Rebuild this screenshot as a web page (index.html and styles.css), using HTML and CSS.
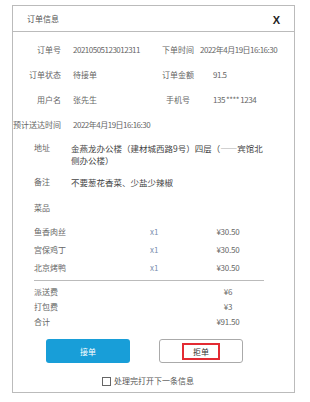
FILE: index.html
```html
<!DOCTYPE html>
<html lang="zh-CN">
<head>
  <meta charset="UTF-8">
  <title>订单信息</title>
  <link rel="stylesheet" href="styles.css">
</head>
<body>

  <!-- Order dialog -->
  <div class="dialog">
    <div class="dialog-header">
      <span class="dialog-title">订单信息</span>
      <span class="close">X</span>
    </div>

    <!-- Basic info -->
    <div class="info-grid">
      <span class="label">订单号</span>
      <span class="value num">20210505123012311</span>
      <span class="label2">下单时间</span>
      <span class="value2 wide num">2022年4月19日16:16:30</span>

      <span class="label">订单状态</span>
      <span class="value">待接单</span>
      <span class="label2">订单金额</span>
      <span class="value2 num">91.5</span>

      <span class="label">用户名</span>
      <span class="value">张先生</span>
      <span class="label2">手机号</span>
      <span class="value2 num">135 **** 1234</span>

      <span class="label">预计送达时间</span>
      <span class="value num">2022年4月19日16:16:30</span>
    </div>

    <div class="detail address">
      <span class="label">地址</span>
      <span class="text">金燕龙办公楼（建材城西路9号）四层（——宾馆北侧办公楼）</span>
    </div>

    <div class="detail remark">
      <span class="label">备注</span>
      <span class="text">不要葱花香菜、少盐少辣椒</span>
    </div>

    <div class="dishes-title">菜品</div>

    <div class="dishes">
      <span>鱼香肉丝</span><span class="qty">x1</span><span class="price">¥30.50</span>
      <span>宫保鸡丁</span><span class="qty">x1</span><span class="price">¥30.50</span>
      <span>北京烤鸭</span><span class="qty">x1</span><span class="price">¥30.50</span>
    </div>

    <div class="divider"></div>

    <div class="fees">
      <span>派送费</span><span class="price">¥6</span>
      <span>打包费</span><span class="price">¥3</span>
      <span>合计</span><span class="price">¥91.50</span>
    </div>

    <div class="actions">
      <button class="btn btn-accept">接单</button>
      <button class="btn btn-reject"><span class="reject-mark">拒单</span></button>
    </div>

    <label class="next">
      <span class="checkbox"></span>
      处理完打开下一条信息
    </label>
  </div>

</body>
</html>
```

FILE: styles.css
```css
html, body {
  margin: 0;
  padding: 0;
  background-color: #ffffff;
  font-family: "Noto Sans CJK SC", "Noto Sans", sans-serif;
  font-size: 8px;
  color: #666;
}

.dialog {
  margin: 5px 0 0 12px;
  width: 281px;
  height: 386px;
  border: 1px solid #bbb;
  box-shadow: 0 1px 0 #eee;
}

.dialog-header {
  height: 25px;
  border-bottom: 1px solid #bbb;
  display: flex;
  align-items: center;
  justify-content: space-between;
  padding: 0 14px 0 14px;
}

.dialog-title {
  color: #555;
}

.close {
  font-family: "Liberation Sans", Arial, sans-serif;
  font-weight: bold;
  font-size: 11px;
  color: #222;
  padding-top: 3px;
}

/* Basic info grid */
.info-grid {
  display: grid;
  grid-template-columns: 48px 99px 36px 1fr;
  row-gap: 11px;
  padding-top: 11px;
  line-height: 14px;
}

.info-grid .label {
  text-align: right;
  white-space: nowrap;
}

.info-grid .value {
  padding-left: 12px;
  white-space: nowrap;
}

.info-grid .label2 {
  text-align: center;
  white-space: nowrap;
}

.info-grid .value2 {
  padding-left: 17px;
  white-space: nowrap;
}

.info-grid .value2.wide {
  padding-left: 4px;
}

.num {
  letter-spacing: -0.5px;
}

/* Address and remark */
.detail {
  display: grid;
  grid-template-columns: 37px 195px;
  padding-left: 21px;
  line-height: 12px;
}

.detail .text {
  color: #444;
  font-size: 8.5px;
}

.address {
  margin-top: 10px;
}

.remark {
  margin-top: 10px;
}

.dishes-title {
  padding-left: 21px;
  margin-top: 14px;
  line-height: 12px;
}

/* Dish list */
.dishes {
  display: grid;
  grid-template-columns: 116px 48px 60px;
  row-gap: 6px;
  padding-left: 21px;
  margin-top: 12px;
  line-height: 12px;
}

.qty {
  color: #7a8fb0;
}

.price {
  text-align: center;
  letter-spacing: -0.2px;
}

.divider {
  height: 1px;
  background-color: #bbb;
  margin: 6px 30px 0 21px;
}

.fees {
  display: grid;
  grid-template-columns: 164px 60px;
  row-gap: 3px;
  padding-left: 21px;
  margin-top: 5px;
  line-height: 12px;
}

/* Buttons */
.actions {
  display: flex;
  gap: 29px;
  padding-left: 33px;
  margin-top: 11px;
}

.btn {
  width: 84px;
  height: 24px;
  border-radius: 3px;
  font-family: inherit;
  font-size: 8px;
  cursor: pointer;
  display: flex;
  align-items: center;
  justify-content: center;
  padding: 0;
}

.btn-accept {
  background-color: #189ed8;
  border: none;
  color: #fff;
}

.btn-reject {
  background-color: #fff;
  border: 1px solid #aaa;
  color: #333;
}

.reject-mark {
  width: 34px;
  height: 13px;
  line-height: 13px;
  border: 2px solid #e32b33;
  text-align: center;
}

.next {
  display: flex;
  align-items: center;
  gap: 3px;
  padding-left: 89px;
  margin-top: 12px;
  line-height: 12px;
  color: #555;
}

.checkbox {
  width: 7px;
  height: 7px;
  border: 1px solid #666;
}
```
